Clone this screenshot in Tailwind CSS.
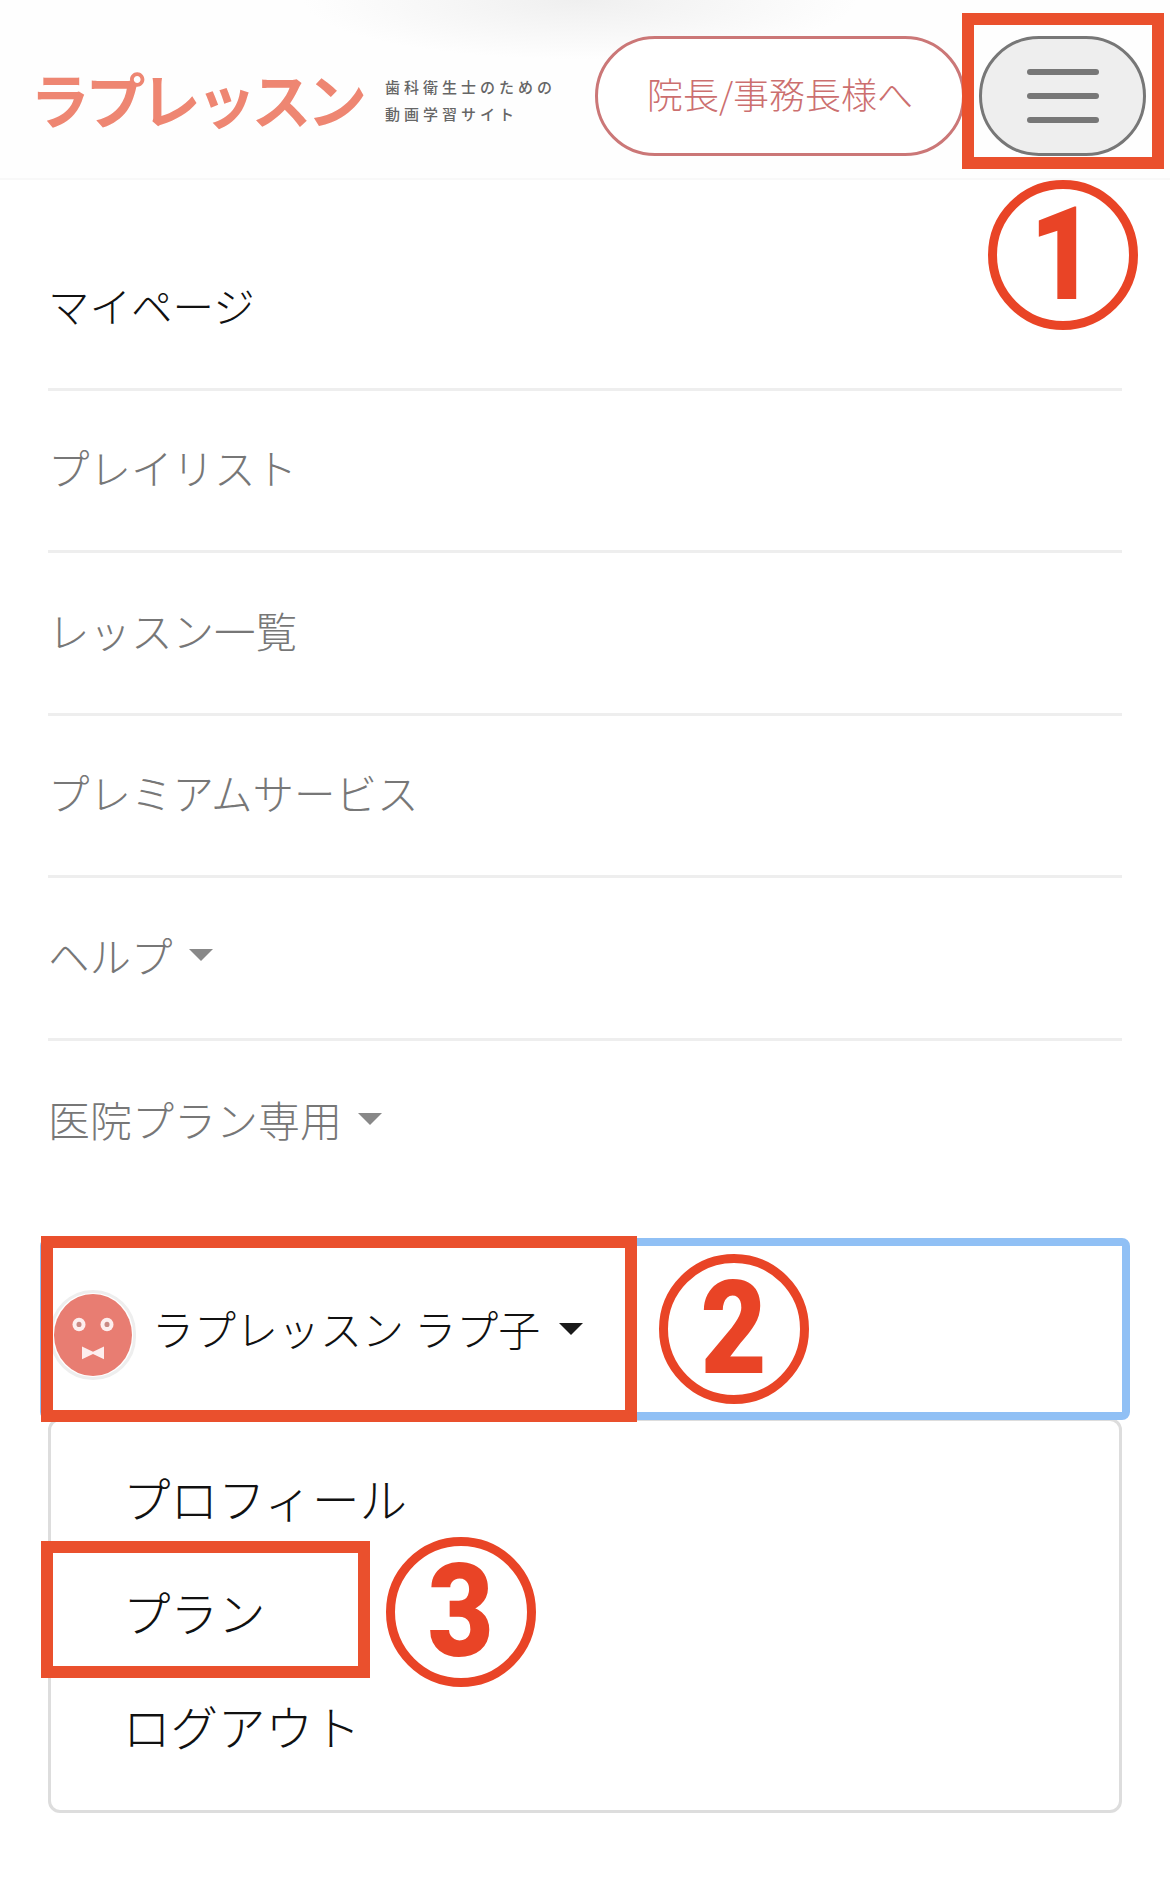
<!DOCTYPE html>
<html lang="ja">
<head>
  <meta charset="UTF-8">
  <meta name="viewport" content="width=device-width, initial-scale=1.0">
  <title>ラプレッスン</title>
  <script src="https://cdn.jsdelivr.net/npm/@tailwindcss/browser@4"></script>
</head>
<body class="bg-white [font-family:'Noto_Sans_CJK_JP',sans-serif]">
  <div class="relative w-[1170px] h-[1895px] overflow-hidden">

    <!-- header -->
    <header class="relative h-[180px] pt-[22px] border-b-2 border-[#f8f8f8] bg-[#fefefe] flex items-center">
      <div class="absolute left-[300px] top-[-60px] w-[560px] h-[120px] bg-[radial-gradient(ellipse_at_center,#efefef_0%,#fefefe_70%)]"></div>
      <div class="relative ml-[30px] mb-[4px] w-[339px] text-[60px] leading-none font-bold tracking-[-4.6px] text-[#ee8672] whitespace-nowrap">ラプレッスン</div>
      <div class="relative ml-[16px] w-[200px] text-[15px] leading-[27px] tracking-[4px] font-medium text-[#666] whitespace-nowrap">
        <p>歯科衛生士のための</p>
        <p>動画学習サイト</p>
      </div>
      <a class="absolute left-[595px] top-[36px] w-[370px] h-[120px] pb-[6px] bg-white border-[3px] border-[#cb7777] rounded-[60px] flex items-center justify-center text-[36px] font-light text-[#cc6f6f]">院長/事務長様へ</a>
      <button class="absolute left-[979px] top-[36px] w-[167px] h-[120px] bg-[#eeeeee] border-[3px] border-[#777] rounded-[60px] flex flex-col items-center justify-center gap-[18px]">
        <span class="block w-[72px] h-[6px] rounded-full bg-[#777]"></span>
        <span class="block w-[72px] h-[6px] rounded-full bg-[#777]"></span>
        <span class="block w-[72px] h-[6px] rounded-full bg-[#777]"></span>
      </button>
    </header>

    <!-- menu -->
    <nav class="px-[48px] pt-[48px] text-[41.5px] font-light text-[#777]">
      <ul>
        <li class="h-[162.5px] pb-[6px] border-b-[3px] border-[#eeeeee] flex items-center text-[#111]">マイページ</li>
        <li class="h-[162.5px] pb-[6px] border-b-[3px] border-[#eeeeee] flex items-center">プレイリスト</li>
        <li class="h-[162.5px] pb-[6px] border-b-[3px] border-[#eeeeee] flex items-center">レッスン一覧</li>
        <li class="h-[162.5px] pb-[6px] border-b-[3px] border-[#eeeeee] flex items-center">プレミアムサービス</li>
        <li class="h-[162.5px] pb-[6px] border-b-[3px] border-[#eeeeee] flex items-center gap-[16px]">ヘルプ
          <span class="w-0 h-0 border-x-[12px] border-x-transparent border-t-[12px] border-t-[#888]"></span>
        </li>
        <li class="h-[162.5px] pb-[6px] flex items-center gap-[16px] text-[42px]">医院プラン専用
          <span class="w-0 h-0 border-x-[12px] border-x-transparent border-t-[12px] border-t-[#888]"></span>
        </li>
      </ul>

      <!-- user dropdown -->
      <div class="relative mt-[35px] -mx-[8px] h-[182px] border-[8px] border-[#90c0f5] rounded-[8px] flex items-center text-[42px] text-[#111]">
        <div class="ml-[2px] mt-[12px] w-[86px] h-[90px] shrink-0 rounded-full border-[3px] border-[#eeeeee] p-[1px]">
          <svg viewBox="0 0 78 78" class="w-full h-full" preserveAspectRatio="none">
            <circle cx="39" cy="39" r="39" fill="#e87d72"/>
            <circle cx="25" cy="29" r="6.5" fill="#fdeeee"/>
            <circle cx="25" cy="29" r="2.5" fill="#c98a84"/>
            <circle cx="53" cy="29" r="6.5" fill="#fdeeee"/>
            <circle cx="53" cy="29" r="2.5" fill="#c98a84"/>
            <path d="M28 50 L39 55 L50 50 L50 62 L39 57 L28 62 Z" fill="#fdeeee"/>
          </svg>
        </div>
        <span class="ml-[16px] mb-[4px] whitespace-nowrap [word-spacing:1px]">ラプレッスン ラプ子</span>
        <span class="ml-[19px] w-0 h-0 border-x-[12px] border-x-transparent border-t-[12px] border-t-[#1a1a1a]"></span>
      </div>
      <div class="-mt-[2px] h-[395px] border-[3px] border-[#dddddd] rounded-[12px] pt-[20px] text-[47.5px] text-[#111] flex flex-col">
        <a class="h-[114px] pl-[72px] flex items-center">プロフィール</a>
        <a class="h-[114px] pl-[72px] flex items-center">プラン</a>
        <a class="h-[114px] pl-[72px] flex items-center">ログアウト</a>
      </div>
    </nav>

    <!-- annotations drawn over the screenshot -->
    <div class="absolute left-[962px] top-[13px] w-[202px] h-[156px] border-[12px] border-[#ea502d]"></div>
    <div class="absolute left-[41px] top-[1236px] w-[596px] h-[186px] border-[12px] border-[#ea502d]"></div>
    <div class="absolute left-[41px] top-[1541px] w-[329px] h-[137px] border-[12px] border-[#ea502d]"></div>

    <div class="absolute left-[988px] top-[180px] w-[150px] h-[150px] rounded-full border-[9px] border-[#e94426] flex items-center justify-center text-[130px] leading-none font-black text-[#e94426] [font-family:Roboto,sans-serif]"><span class="inline-block scale-x-[.88]">1</span></div>
    <div class="absolute left-[659px] top-[1254px] w-[150px] h-[150px] rounded-full border-[9px] border-[#e94426] flex items-center justify-center text-[130px] leading-none font-black text-[#e94426] [font-family:Roboto,sans-serif]"><span class="inline-block scale-x-[.88]">2</span></div>
    <div class="absolute left-[386px] top-[1537px] w-[150px] h-[150px] rounded-full border-[9px] border-[#e94426] flex items-center justify-center text-[130px] leading-none font-black text-[#e94426] [font-family:Roboto,sans-serif]"><span class="inline-block scale-x-[.88]">3</span></div>
  </div>
</body>
</html>
